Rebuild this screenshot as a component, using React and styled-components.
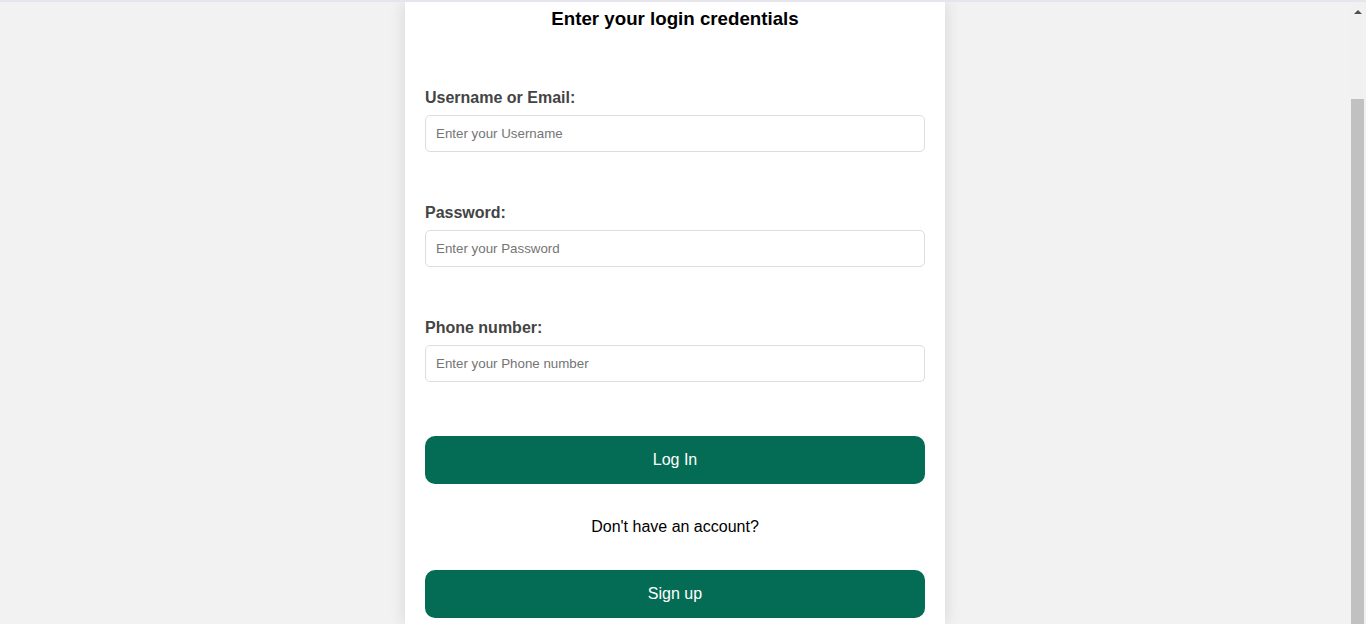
import React from 'react';
import styled, { createGlobalStyle } from 'styled-components';

const GlobalStyle = createGlobalStyle`
  html, body {
    margin: 0;
    padding: 0;
    height: 100%;
    overflow: hidden;
    background: #f2f2f2;
    font-family: "Liberation Sans", Arial, sans-serif;
  }
  #root {
    height: 100%;
  }
`;

const fields = [
  { id: 'username', label: 'Username or Email:', placeholder: 'Enter your Username', type: 'text' },
  { id: 'password', label: 'Password:', placeholder: 'Enter your Password', type: 'password' },
  { id: 'phone', label: 'Phone number:', placeholder: 'Enter your Phone number', type: 'tel' },
];

class App extends React.Component {
  render() {
    return (
      <>
        <GlobalStyle />
        <Page>
          <Main>
            <Card>
              <Title>Enter your login credentials</Title>
              <Form onSubmit={(e) => e.preventDefault()}>
                {fields.map((f) => (
                  <Field key={f.id}>
                    <Label htmlFor={f.id}>{f.label}</Label>
                    <Input id={f.id} type={f.type} placeholder={f.placeholder} />
                  </Field>
                ))}
                <Button type="submit" top={54}>Log In</Button>
              </Form>
              <Prompt>Don't have an account?</Prompt>
              <Button type="button">Sign up</Button>
            </Card>
          </Main>
          <Scrollbar>
            <ArrowButton />
            <Thumb />
          </Scrollbar>
        </Page>
      </>
    );
  }
}

export default App;

const Page = styled.div`
  display: flex;
  height: 100%;
  border-top: 2px solid #e6e4ec;
  box-sizing: border-box;
`;

const Main = styled.div`
  flex: 1;
  display: flex;
  justify-content: center;
  overflow: hidden;
`;

const Card = styled.div`
  width: 540px;
  flex: none;
  box-sizing: border-box;
  padding: 6px 20px 20px;
  background: #fff;
  box-shadow: 0 0 16px rgba(0, 0, 0, 0.12);
  display: flex;
  flex-direction: column;
`;

const Title = styled.h3`
  margin: 0;
  font-size: 18.72px;
  line-height: 21px;
  font-weight: 700;
  color: #000;
  text-align: center;
`;

const Form = styled.form`
  display: flex;
  flex-direction: column;
  gap: 51px;
  margin-top: 59px;
`;

const Field = styled.div`
  display: flex;
  flex-direction: column;
  gap: 8px;
`;

const Label = styled.label`
  padding-top: 1px;
  font-size: 16px;
  line-height: 18px;
  font-weight: 700;
  color: #444;
`;

const Input = styled.input`
  height: 37px;
  box-sizing: border-box;
  padding: 0 10px;
  border: 1px solid #ddd;
  border-radius: 5px;
  font-family: "Liberation Sans", Arial, sans-serif;
  font-size: 13.33px;
  color: #333;
  outline: none;

  &::placeholder {
    color: #757575;
  }
`;

const Button = styled.button`
  flex: none;
  height: 48px;
  margin-top: ${(p) => (p.top ? `${p.top - 51}px` : '0')};
  border: none;
  border-radius: 10px;
  background: #046c55;
  color: #fff;
  font-family: "Liberation Sans", Arial, sans-serif;
  font-size: 16px;
  cursor: pointer;
`;

const Prompt = styled.p`
  margin: 34px 0 34px;
  font-size: 16px;
  line-height: 18px;
  color: #000;
  text-align: center;
`;

const Scrollbar = styled.div`
  width: 16px;
  flex: none;
  background: #f1f1f1;
  display: flex;
  flex-direction: column;
  align-items: center;
`;

const ArrowButton = styled.div`
  height: 97px;
  width: 100%;
  display: flex;
  justify-content: center;
  padding-top: 8px;
  box-sizing: border-box;

  &::before {
    content: '';
    width: 0;
    height: 0;
    border-left: 4px solid transparent;
    border-right: 4px solid transparent;
    border-bottom: 4px solid #505050;
  }
`;

const Thumb = styled.div`
  flex: 1;
  width: 13px;
  margin-left: 1px;
  align-self: flex-start;
  background: #c1c1c1;
`;
